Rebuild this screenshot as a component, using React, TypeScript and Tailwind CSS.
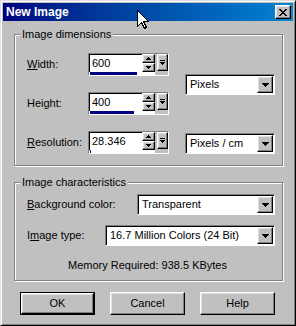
import React from 'react';

const raised =
  'bg-[#c0c0c0] border border-t-white border-l-white border-r-black border-b-black shadow-[inset_-1px_-1px_0_#808080,inset_1px_1px_0_#dfdfdf]';
const sunken = 'border border-t-[#808080] border-l-[#808080] border-r-white border-b-white';

// pixel triangles
function DownArrow() {
  return (
    <svg width="7" height="4" shapeRendering="crispEdges">
      <rect x="0" y="0" width="7" height="1" fill="#000" />
      <rect x="1" y="1" width="5" height="1" fill="#000" />
      <rect x="2" y="2" width="3" height="1" fill="#000" />
      <rect x="3" y="3" width="1" height="1" fill="#000" />
    </svg>
  );
}

function SmallTri({ up }: { up?: boolean }) {
  return (
    <svg width="5" height="3" shapeRendering="crispEdges">
      {up ? (
        <>
          <rect x="2" y="0" width="1" height="1" fill="#000" />
          <rect x="1" y="1" width="3" height="1" fill="#000" />
          <rect x="0" y="2" width="5" height="1" fill="#000" />
        </>
      ) : (
        <>
          <rect x="0" y="0" width="5" height="1" fill="#000" />
          <rect x="1" y="1" width="3" height="1" fill="#000" />
          <rect x="2" y="2" width="1" height="1" fill="#000" />
        </>
      )}
    </svg>
  );
}

function SliderGlyph() {
  return (
    <svg width="5" height="5" shapeRendering="crispEdges">
      <rect x="0" y="0" width="5" height="1" fill="#000" />
      <rect x="0" y="2" width="5" height="1" fill="#000" />
      <rect x="1" y="3" width="3" height="1" fill="#000" />
      <rect x="2" y="4" width="1" height="1" fill="#000" />
    </svg>
  );
}

function CloseGlyph() {
  const rows = ['11000011', '01100110', '00111100', '00011000', '00111100', '01100110', '11000011'];
  return (
    <svg width="8" height="7" shapeRendering="crispEdges">
      {rows.map((r, y) =>
        r.split('').map((c, x) => (c === '1' ? <rect key={`${x}-${y}`} x={x} y={y} width="1" height="1" fill="#000" /> : null))
      )}
    </svg>
  );
}

function Group({ title, className, children }: { title: string; className: string; children: React.ReactNode }) {
  return (
    <div className={`relative border border-[#808080] shadow-[inset_1px_1px_0_#fff,1px_1px_0_#fff] ${className}`}>
      <span className="absolute -top-[7px] left-[5px] bg-[#c0c0c0] px-[2px] leading-[13px]">{title}</span>
      {children}
    </div>
  );
}

function SpinField({ value, bar }: { value: string; bar: number }) {
  return (
    <div className={`w-[81px] h-[23px] flex flex-col ${sunken}`}>
      <div className="flex h-[18px]">
        <div className="w-[53px] h-full bg-white border-t border-l border-black pl-[2px] flex items-center leading-none">
          {value}
        </div>
        <div className="w-[13px] flex flex-col">
          <div className={`h-[9px] flex items-center justify-center ${raised}`}>
            <SmallTri up />
          </div>
          <div className={`h-[9px] flex items-center justify-center ${raised}`}>
            <SmallTri />
          </div>
        </div>
        <div className="w-[2px]" />
        <div className={`w-[11px] h-[17px] flex items-center justify-center ${raised}`}>
          <SliderGlyph />
        </div>
      </div>
      <div className="flex h-[3px]">
        <div className="w-[66px] h-full bg-white pl-[1px]">
          <div className="h-full bg-[#000080]" style={{ width: bar }} />
        </div>
      </div>
    </div>
  );
}

function Dropdown({ value, className }: { value: string; className: string }) {
  return (
    <div className={`h-[21px] bg-white flex items-center shadow-[inset_1px_1px_0_#000] ${sunken} ${className}`}>
      <span className="flex-1 pl-[4px] leading-none">{value}</span>
      <div className={`w-[16px] h-[17px] mr-[1px] flex items-center justify-center ${raised}`}>
        <DownArrow />
      </div>
    </div>
  );
}

function Label({ children, className }: { children: React.ReactNode; className: string }) {
  return <div className={`shrink-0 leading-none ${className}`}>{children}</div>;
}

function Button({ label, isDefault }: { label: string; isDefault?: boolean }) {
  if (isDefault) {
    return (
      <div className="w-[75px] h-[23px] border border-black flex">
        <div className={`flex-1 flex items-center justify-center ${raised}`}>{label}</div>
      </div>
    );
  }
  return <div className={`w-[75px] h-[23px] flex items-center justify-center ${raised}`}>{label}</div>;
}

export default function App() {
  return (
    <div className="relative w-[296px] h-[326px] overflow-hidden bg-[#c0c0c0] text-black text-[11px] font-['Liberation_Sans',Arial,sans-serif] border border-t-[#dfdfdf] border-l-[#dfdfdf] border-r-black border-b-black shadow-[inset_1px_1px_0_#fff,inset_-1px_-1px_0_#808080] p-[2px]">
      {/* Title bar */}
      <div className="h-[18px] flex items-center bg-gradient-to-r from-[#000080] to-[#1084d0] pl-[3px] pr-[2px]">
        <span className="flex-1 text-white font-bold text-[12px] leading-none">New Image</span>
        <div className={`w-[16px] h-[14px] flex items-center justify-center ${raised}`}>
          <CloseGlyph />
        </div>
      </div>

      {/* Image dimensions */}
      <Group title="Image dimensions" className="ml-[11px] mt-[13px] w-[269px] h-[132px]">
        <div className="flex">
          <div className="pl-[12px] pt-[18px] flex flex-col gap-[16px]">
            <div className="flex items-center h-[23px]">
              <Label className="w-[61px]">
                <span className="underline">W</span>idth:
              </Label>
              <SpinField value="600" bar={47} />
            </div>
            <div className="flex items-center h-[23px]">
              <Label className="w-[61px]">Height:</Label>
              <SpinField value="400" bar={44} />
            </div>
            <div className="flex items-center h-[23px]">
              <Label className="w-[61px]">
                <span className="underline">R</span>esolution:
              </Label>
              <SpinField value="28.346" bar={1} />
            </div>
          </div>
          <div className="ml-[16px] pt-[39px] flex flex-col gap-[38px]">
            <Dropdown value="Pixels" className="w-[90px]" />
            <Dropdown value="Pixels / cm" className="w-[90px]" />
          </div>
        </div>
      </Group>

      {/* Image characteristics */}
      <Group title="Image characteristics" className="ml-[11px] mt-[16px] w-[269px] h-[99px]">
        <div className="pl-[12px] pt-[11px] flex flex-col gap-[10px]">
          <div className="flex items-center">
            <Label className="w-[110px]">
              <span className="underline">B</span>ackground color:
            </Label>
            <Dropdown value="Transparent" className="w-[138px]" />
          </div>
          <div className="flex items-center">
            <Label className="w-[78px]">
              I<span className="underline">m</span>age type:
            </Label>
            <Dropdown value="16.7 Million Colors (24 Bit)" className="w-[170px]" />
          </div>
        </div>
        <div className="mt-[13px] text-center leading-[13px] pr-[2px]">Memory Required: 938.5 KBytes</div>
      </Group>

      {/* Buttons */}
      <div className="ml-[17px] mt-[11px] flex gap-[15px]">
        <Button label="OK" isDefault />
        <Button label="Cancel" />
        <Button label="Help" />
      </div>

      {/* Mouse pointer */}
      <svg className="absolute left-[136px] top-[9px]" width="13" height="20" shapeRendering="crispEdges">
        <path d="M0.5 0.5 V16.5 L4.5 12.5 L7.5 18.5 L9.5 17.5 L6.5 11.5 H11.5 Z" fill="#fff" stroke="#000" strokeWidth="1" />
      </svg>
    </div>
  );
}
